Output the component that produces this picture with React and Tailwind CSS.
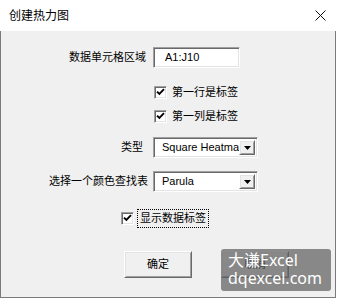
import React from 'react';

const sunken =
  'border border-t-[#a0a0a0] border-l-[#a0a0a0] border-r-white border-b-white shadow-[inset_1px_1px_0_#696969,inset_-1px_-1px_0_#e3e3e3]';
const raised =
  'border border-t-white border-l-white border-r-[#696969] border-b-[#696969] shadow-[inset_1px_1px_0_#e3e3e3,inset_-1px_-1px_0_#a0a0a0]';

const CheckBox = () => (
  <span className={`w-[13px] h-[13px] bg-white flex items-center justify-center shrink-0 ${sunken}`}>
    <svg width="9" height="8" viewBox="0 0 9 8">
      <path d="M1 3.6 L3.4 6 L8 1.2" stroke="#000" strokeWidth="1.9" fill="none" />
    </svg>
  </span>
);

const Combo = ({ value, pl }) => (
  <div className={`w-[105px] h-[21px] bg-white flex items-stretch p-[2px] ${sunken}`}>
    <div className={`flex-1 overflow-hidden whitespace-nowrap flex items-center ${pl} text-[11px] text-black`}>
      {value}
    </div>
    <div className={`w-[16px] shrink-0 bg-[#f0f0f0] flex items-center justify-center ${raised}`}>
      <svg width="7" height="4" viewBox="0 0 7 4">
        <path d="M0 0 H7 L3.5 4 Z" fill="#000" />
      </svg>
    </div>
  </div>
);

const App = () => {
  return (
    <div className="w-[338px] h-[299px] bg-white flex flex-col font-['Liberation_Sans','Noto_Sans_CJK_SC',sans-serif] text-black">
      {/* title bar */}
      <div className="h-[31px] flex items-center justify-between pl-[9px] pr-[10px] w-[336px]">
        <span className="text-[12px] leading-[14px]">创建热力图</span>
        <svg width="11" height="11" viewBox="0 0 11 11">
          <path d="M0.5 0.5 L10.5 10.5 M10.5 0.5 L0.5 10.5" stroke="#111" strokeWidth="1" />
        </svg>
      </div>

      {/* body */}
      <div className="relative w-[336px] h-[267px] bg-[#f0f0f0] border-l border-r border-b border-[#7a7a7a] flex flex-col text-[11px] leading-[13px]">
        <div className="mt-[16px] h-[20px] flex items-center">
          <span className="w-[145px] text-right">数据单元格区域</span>
          <div className={`ml-[7px] w-[87px] h-[21px] bg-white flex items-center pl-[11px] ${sunken}`}>A1:J10</div>
        </div>

        <div className="mt-[15px] h-[20px] flex items-center pl-[153px]">
          <CheckBox />
          <span className="ml-[5px]">第一行是标签</span>
        </div>

        <div className="mt-[4px] h-[20px] flex items-center pl-[153px]">
          <CheckBox />
          <span className="ml-[5px]">第一列是标签</span>
        </div>

        <div className="mt-[11px] h-[21px] flex items-center">
          <span className="w-[142px] text-right">类型</span>
          <div className="ml-[10px]">
            <Combo value="Square Heatmap" pl="pl-[6px]" />
          </div>
        </div>

        <div className="mt-[13px] h-[21px] flex items-center">
          <span className="w-[147px] text-right">选择一个颜色查找表</span>
          <div className="ml-[5px]">
            <Combo value="Parula" pl="pl-[6px]" />
          </div>
        </div>

        <div className="mt-[16px] h-[20px] flex items-center pl-[120px]">
          <CheckBox />
          <span className="ml-[3px] h-[19px] px-[2px] flex items-center border border-dotted border-black">显示数据标签</span>
        </div>

        <div className="mt-[23px] flex">
          <button className={`ml-[123px] w-[68px] h-[27px] bg-[#f0f0f0] flex items-center justify-center text-[11px] ${raised}`}>确定</button>
          <button className={`ml-[29px] w-[68px] h-[27px] bg-[#f0f0f0] flex items-center justify-center text-[11px] ${raised}`}>取消</button>
        </div>

        {/* watermark */}
        <div className="absolute left-[220px] top-[218px] w-[110px] h-[42px] rounded-[3px] bg-[rgba(95,95,95,0.72)] pl-[7px] pt-[2px] text-white text-[16px] leading-[18px] font-['Noto_Sans','Noto_Sans_CJK_SC',sans-serif]">
          <div>大谦Excel</div>
          <div>dqexcel.com</div>
        </div>
      </div>
    </div>
  );
};

export default App;
